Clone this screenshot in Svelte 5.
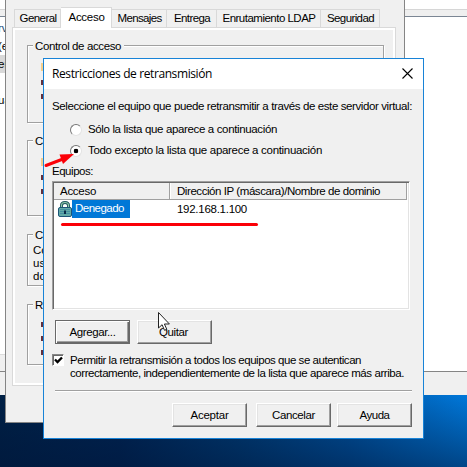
<script>
  const tabs = [
    { t: 'General', w: 47, tw: 37 },
    { t: 'Acceso', w: 51, tw: 36, on: true },
    { t: 'Mensajes', w: 55, tw: 44 },
    { t: 'Entrega', w: 50, tw: 36 },
    { t: 'Enrutamiento LDAP', w: 104, tw: 93 },
    { t: 'Seguridad', w: 59, tw: 47 }
  ];
  const groups = [
    { t: 'Control de acceso', w: 86, h: 78, gap: 17 },
    { t: 'Comunicación segura', w: 104, h: 76, gap: 18 },
    { t: 'Control de conexión', w: 98, h: 52, gap: 18 },
    { t: 'Restricciones de retransmisión', w: 152, h: 61, gap: 0 }
  ];
  // Spread the letters so that the run takes the given width.
  function fit(node, width) {
    const r = node.getBoundingClientRect().width;
    const n = node.textContent.length;
    node.style.letterSpacing = `${(width - r) / n}px`;
  }
</script>

{#snippet txt(t, w)}<span class="t" use:fit={w}>{t}</span>{/snippet}

<div class="desktop">
  <div class="console">
    <div class="toolbar"></div>
    <div class="body">
      <div class="tree">
        <span class="node n1">rv</span>
        <span class="node">(e</span>
        <span class="node sel">er</span>
        <span class="node n4">ua</span>
      </div>
      <div class="treefoot"></div>
    </div>
    <div class="status"></div>
  </div>

  <div class="props">
    <div class="tabs">
      {#each tabs as tab}
        <div class="tab" class:on={tab.on} style="width:{tab.w}px">{@render txt(tab.t, tab.tw)}</div>
      {/each}
    </div>
    <div class="page">
      {#each groups as g, i}
        <div class="group" style="height:{g.h}px;margin-bottom:{g.gap}px">
          <div class="legend">{@render txt(g.t, g.w)}</div>
          {#if i === 2}
            <div class="para">Conceder o<br />usuarios<br />dominio</div>
          {:else}
            <div class="hint" class:low={i === 3}><i></i><b></b><b></b><b class="extra"></b></div>
          {/if}
        </div>
      {/each}
    </div>
  </div>

  <div class="dialog">
    <div class="title">
      <span class="cap" use:fit={160}>Restricciones de retransmisión</span>
      <svg width="11" height="11" viewBox="0 0 11 11"><path d="M.5 .5l10 10M10.500 .5l-10 10" stroke="#000" stroke-width="1.1" /></svg>
    </div>
    <div class="content">
      <div class="line intro">{@render txt('Seleccione el equipo que puede retransmitir a través de este servidor virtual:', 360)}</div>
      <div class="line radio r1"><span class="circle"></span>{@render txt('Sólo la lista que aparece a continuación', 189)}</div>
      <div class="line radio"><span class="circle checked"></span>{@render txt('Todo excepto la lista que aparece a continuación', 234)}</div>
      <div class="line label">{@render txt('Equipos:', 41)}</div>
      <div class="list">
        <div class="head">
          <div class="th a">{@render txt('Acceso', 36)}</div>
          <div class="th b">{@render txt('Dirección IP (máscara)/Nombre de dominio', 203)}</div>
        </div>
        <div class="row">
          <svg class="lock" width="14" height="17" viewBox="0 0 14 17">
            <path d="M3.500 8V4.500Q3.500 1.500 7 1.500T10.500 4.500V8" fill="none" stroke="#1d5560" stroke-width="3" />
            <path d="M3.500 8V4.500Q3.500 1.500 7 1.500T10.500 4.500V8" fill="none" stroke="#8fc7a5" stroke-width="1.200" />
            <rect x=".5" y="6.500" width="13" height="9" rx="1.500" fill="#62aaa6" stroke="#1b5578" />
            <path d="M2 8.500h10M2 10.500h10M2 12.500h10" stroke="#438fa0" />
            <path d="M6 9.500h2v3.500H6z" fill="#092b49" />
          </svg>
          <span class="chosen">{@render txt('Denegado', 49)}</span>
          <span class="ip">{@render txt('192.168.1.100', 70)}</span>
        </div>
      </div>
      <div class="buttons first">
        <div class="btn default">{@render txt('Agregar...', 46)}</div>
        <div class="btn quit">{@render txt('Quitar', 29)}</div>
      </div>
      <div class="check">
        <span class="box"><svg width="9" height="9" viewBox="0 0 9 9"><path d="M1 3.500l2.500 2.500L8 1.500" fill="none" stroke="#000" stroke-width="2.300" /></svg></span>
        <div>
          <div>{@render txt('Permitir la retransmisión a todos los equipos que se autentican', 291)}</div>
          <div>{@render txt('correctamente, independientemente de la lista que aparece más arriba.', 334)}</div>
        </div>
      </div>
      <div class="rule"></div>
      <div class="buttons last">
        <div class="btn">{@render txt('Aceptar', 38)}</div>
        <div class="btn c">{@render txt('Cancelar', 43)}</div>
        <div class="btn">{@render txt('Ayuda', 30)}</div>
      </div>
    </div>
  </div>

  <svg class="marks" width="467" height="467" viewBox="0 0 467 467">
    <path d="M46 165.500L63 159" stroke="#fb0007" stroke-width="3" stroke-linecap="round" />
    <path d="M59.500 154.500L74 154L63 164z" fill="#fb0007" />
    <path d="M62.500 224.500H256.500" stroke="#fb0007" stroke-width="3" stroke-linecap="round" />
    <path d="M158.500 312.500v15.500l3.600-3.300 2.400 5.600 2.300-1-2.400-5.300h5z" fill="#fff" stroke="#222" />
  </svg>
</div>

<style>
  :global(body) { margin: 0; overflow: hidden; }
  .desktop { position: relative; width: 467px; height: 467px; overflow: hidden; font: 11.5px/13px 'Liberation Sans', Arial, sans-serif; color: #000; background: linear-gradient(180deg, transparent 395px, rgba(0, 20, 55, .5) 467px), linear-gradient(90deg, #002045 0, #002452 120px, #003c75 240px, #0053a0 350px, #0078da 467px); }
  .desktop * { box-sizing: border-box; }
  .t, .cap { display: inline-block; white-space: pre; }
  .console { height: 395px; display: flex; flex-direction: column; background: #fff; }
  .toolbar { height: 17px; border-top: 9px solid #fff; border-bottom: 1px solid #7b8694; background: #efefef; box-shadow: inset 0 1px #d6d6d6; }
  .body { flex: 1; display: flex; flex-direction: column; justify-content: space-between; }
  .treefoot { width: 6px; height: 17px; background: #f0f0f0; border-top: 1px solid #dcdcdc; }
  .status { height: 24px; border-top: 1px solid #858585; background: #f0f0f0; }
  .tree { width: 6px; display: flex; flex-direction: column; overflow: hidden; }
  .node { height: 18px; line-height: 18px; margin-left: -2px; }
  .n1 { margin-top: 2px; color: #174b79; }
  .sel { background: #d9d9d9; }
  .n4 { margin-top: 18px; }
  .props { position: absolute; left: 5px; top: -2px; width: 400px; height: 425px; padding: 8px 8px 0 7px; background: #f0f0f0; border: 1px solid #858585; }
  .tabs { display: flex; align-items: flex-end; height: 20px; padding-left: 1px; }
  .tab { height: 18px; display: flex; justify-content: center; align-items: center; border: 1px solid #d9d9d9; border-left-width: 0; border-bottom: 0; padding-left: 1px; }
  .tab:first-child { border-left-width: 1px; }
  .tab.on { height: 21px; background: #fff; z-index: 1; margin-bottom: -1px; padding-bottom: 2px; }
  .page { height: 359px; width: 384px; border: 1px solid #d9d9d9; margin-left: -1px; padding: 17px 8px 0 12px; box-shadow: inset 0 0 0 2px #fff; }
  .group { width: 357px; margin-left: 2px; border: 1px solid #a0a0a0; box-shadow: 1px 1px #fff, inset 1px 1px #fff; }
  .legend { display: table; background: #f0f0f0; padding: 0 3px 0 2px; margin: -6px 0 0 5px; }
  .para { margin: 2px 0 0 5px; width: 40px; white-space: nowrap; overflow: hidden; }
  .hint { margin: 10px 0 0 13px; width: 3px; display: flex; flex-direction: column; gap: 9px; }
  .hint i { height: 8px; background: #f5cf8c; width: 2px; }
  .hint b { height: 5px; width: 3px; background: #64303c; }
  .hint .extra { display: none; }
  .hint.low i { display: none; }
  .hint.low .extra { display: block; }
  .dialog { position: absolute; left: 43px; top: 58px; width: 381px; height: 381px; background: #f0f0f0; border: 1px solid #1883d7; display: flex; flex-direction: column; }
  .title { height: 30px; background: #fff; display: flex; justify-content: space-between; align-items: center; padding: 0 10px 2px 8px; }
  .cap { font: 12px/16px 'Open Sans', 'Noto Sans', sans-serif; padding-top: 2px; }
  .content { padding: 0 11px 0 8px; }
  .line { height: 13px; display: flex; align-items: center; }
  .intro { margin-top: 11px; }
  .radio { margin: 8px 0 0 18px; }
  .r1 { margin-top: 10px; }
  .circle { width: 12px; height: 12px; margin-right: 6px; border-radius: 50%; background: #fff; border: 1.5px solid; border-color: #777 #e3e3e3 #e3e3e3 #777; }
  .checked { background: radial-gradient(circle, #000 2px, #fff 2.6px); }
  .label { margin-top: 8px; }
  .list { width: 358px; height: 129px; margin-top: 3px; background: #fff; border: 1px solid; border-color: #a0a0a0 #fff #fff #a0a0a0; box-shadow: inset 1px 1px #696969, inset -1px -1px #e3e3e3; padding: 1px 2px 0 1px; }
  .head { display: flex; height: 17px; background: #f0f0f0; border-bottom: 1px solid #a0a0a0; }
  .th { border-right: 1px solid #a0a0a0; display: flex; align-items: center; padding: 1px 0 0 6px; }
  .a { width: 116px; }
  .b { flex: 1; box-shadow: inset 1px 0 #fff; padding-left: 7px; }
  .row { display: flex; height: 18px; align-items: center; padding-left: 4px; }
  .chosen { width: 58px; height: 18px; padding: 2px 0 0 3px; background: #0078d7; color: #fff; }
  .ip { margin-left: 47px; }
  .buttons { display: flex; }
  .first { margin: 10px 0 0 3px; gap: 7px; }
  .btn { width: 75px; height: 24px; display: flex; align-items: center; justify-content: center; background: #f0f0f0; border: 1px solid; border-color: #fff #696969 #696969 #fff; box-shadow: inset -1px -1px #a0a0a0, inset 1px 1px #e3e3e3; }
  .btn.default { border-color: #696969; box-shadow: inset 1px 1px #fff, inset -1px -1px #696969, inset -2px -2px #a0a0a0; }
  .quit { padding-right: 2px; }
  .check { display: flex; margin-top: 10px; gap: 6px; }
  .box { width: 12px; height: 12px; display: flex; align-items: center; justify-content: center; background: #fff; border: 1px solid; border-color: #888 #fff #fff #888; box-shadow: inset 1px 1px #696969; }
  .rule { height: 2px; margin: 10px 0 0 3px; background: #a0a0a0; border-bottom: 1px solid #fff; }
  .last { margin-top: 11px; justify-content: flex-end; gap: 6px; }
  .c { margin-left: 3px; }
  .marks { position: absolute; left: 0; top: 0; pointer-events: none; }
</style>
